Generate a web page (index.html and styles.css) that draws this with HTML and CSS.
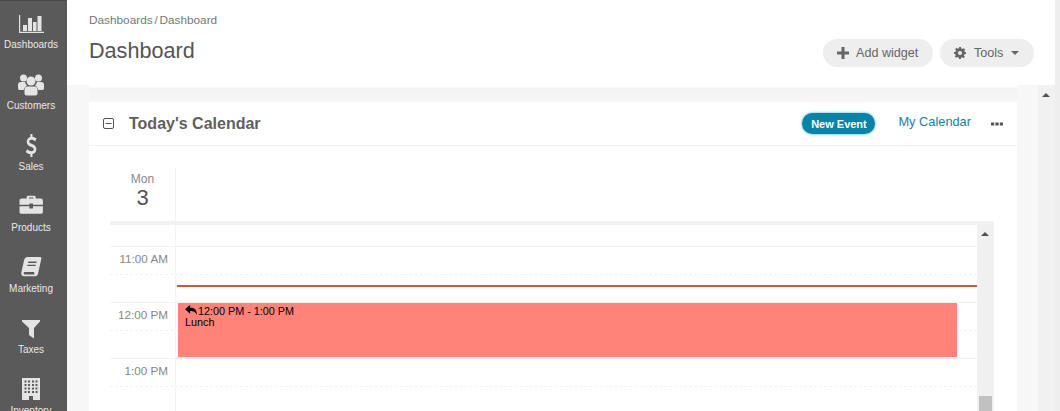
FILE: index.html
```html
<!DOCTYPE html>
<html lang="en">
<head>
    <meta charset="UTF-8">
    <meta name="viewport" content="width=device-width, initial-scale=1.0">
    <title>Dashboard</title>
    <link rel="stylesheet" href="styles.css">
</head>
<body>
    <div class="app">
        <nav class="sidebar">
            <a class="nav-item" href="#">
                <svg class="nav-icon" viewBox="0 0 26 24"><path d="M1 3h1.200v16.800H26V21H1zM5 13h4v6H5zM10 6h4v13h-4zM15 10h3.500v9H15zM19.500 4h4v15h-4z" fill="#e4e4e4"/></svg>
                <span>Dashboards</span>
            </a>
            <a class="nav-item" href="#">
                <svg class="nav-icon" viewBox="0 0 26 24"><g fill="#e4e4e4"><circle cx="5.500" cy="5" r="3.500"/><circle cx="20.500" cy="5" r="3.500"/><circle cx="13" cy="8" r="4.500"/><path d="M0 11.500C0 9.800 1.500 9 3 9h4c.5 1.500 1 2.500 2 3.500-1.500 1-3 2.500-3.300 4.500H1.500C.5 17 0 16 0 15zM26 11.500C26 9.800 24.500 9 23 9h-4c-.5 1.500-1 2.500-2 3.500 1.500 1 3 2.500 3.300 4.500h4.200c1 0 1.500-1 1.500-2zM9.500 13.500h7c2 0 3 1.500 3 3.500v3.500c0 1-1 2-2 2h-9c-1 0-2-1-2-2V17c0-2 1-3.500 3-3.500z"/></g></svg>
                <span>Customers</span>
            </a>
            <a class="nav-item" href="#">
                <svg class="nav-icon" viewBox="0 0 26 24"><path transform="translate(13 0) scale(.85 1) translate(-12.500 0)" d="M11.800 0h2.400v2.800c2 .2 3.600.9 4.800 1.800l-1.500 2.700c-1.300-.9-2.900-1.500-4.500-1.500-1.700 0-2.600.7-2.600 1.700 0 1.200 1.400 1.700 3.400 2.500 3 1.100 5 2.300 5 5.200 0 2.500-1.800 4.400-4.600 4.900V23h-2.400v-2.800c-2.200-.2-4.200-1.100-5.500-2.300l1.700-2.600c1.500 1.200 3.200 2 5 2 1.700 0 2.800-.8 2.800-2 0-1.300-1.300-1.800-3.500-2.600-2.800-1-4.800-2.200-4.800-5 0-2.500 1.800-4.300 4.300-4.800z" fill="#e4e4e4"/></svg>
                <span>Sales</span>
            </a>
            <a class="nav-item" href="#">
                <svg class="nav-icon" viewBox="0 0 26 24"><path transform="translate(1.500 -1) scale(.9)" d="M8 5V3.500C8 2.500 8.800 2 9.500 2h7c.8 0 1.500.5 1.500 1.500V5h5.500C25 5 26 6 26 7.500V12H15v-1.500h-4V12H0V7.500C0 6 1 5 2.500 5zm2.500 0h5V4h-5zM0 13.500h11V16h4v-2.500h11V20c0 1-1 2-2 2H2c-1 0-2-1-2-2z" fill="#e4e4e4"/></svg>
                <span>Products</span>
            </a>
            <a class="nav-item" href="#">
                <svg class="nav-icon" viewBox="0 0 26 24"><path transform="translate(2 0) scale(.88 .92)" d="M8.500 1H23c1 0 1.500.8 1.300 1.800L20.500 19c-.3 1.400-1 2.500-2.500 3H4.500C2.500 22 1 20.500 1.500 18L4.600 4.500C5 2.500 6.500 1 8.500 1zm1 5-.4 1.500h9.500L19 6zm-1 3.500-.4 1.500h9.500l.4-1.500zM5 17.500c-1 0-1.300 2.500.2 2.500h11.300c-.5-.7-.5-1.700-.2-2.500z" fill="#e4e4e4" fill-rule="evenodd"/></svg>
                <span>Marketing</span>
            </a>
            <a class="nav-item" href="#">
                <svg class="nav-icon" viewBox="0 0 26 24"><path d="M4 3h18v1.500l-6 6.500v10.500L11 18v-7L4 4.500z" fill="#e4e4e4"/></svg>
                <span>Taxes</span>
            </a>
            <a class="nav-item" href="#">
                <svg class="nav-icon" viewBox="0 0 26 24"><path d="M4 0h18v22H15v-4h-4v4H4zm2.500 2.500v2h2v-2zm3.500 0v2h2v-2zm4 0v2h2v-2zm3.500 0v2h2v-2zm-11 3.500v2h2V6zm3.500 0v2h2V6zm4 0v2h2V6zm3.500 0v2h2V6zm-11 3.500v2h2v-2zm3.500 0v2h2v-2zm4 0v2h2v-2zm3.500 0v2h2v-2zm-11 3.500v2h2v-2zm3.500 0v2h2v-2zm4 0v2h2v-2zm3.500 0v2h2v-2z" fill="#e4e4e4" fill-rule="evenodd"/></svg>
                <span>Inventory</span>
            </a>
        </nav>

        <div class="main">
            <header class="page-header">
                <div>
                    <div class="breadcrumb">Dashboards / Dashboard</div>
                    <h1>Dashboard</h1>
                </div>
                <div class="header-actions">
                    <button class="pill-btn add-btn">
                        <svg class="btn-icon" viewBox="0 0 12 12"><path d="M4.500 0h3v4.500H12v3H7.500V12h-3V7.500H0v-3h4.500z" fill="#666"/></svg>
                        Add widget
                    </button>
                    <button class="pill-btn tools-btn">
                        <svg class="btn-icon" viewBox="0 0 24 24"><path d="M10 0h4l.6 3.200 2.300 1 2.700-1.900 2.900 2.900-1.900 2.700 1 2.300L24 10v4l-3.200.6-1 2.300 1.900 2.700-2.900 2.900-2.700-1.900-2.300 1L14 24h-4l-.6-3.200-2.300-1-2.700 1.900-2.900-2.900 1.900-2.700-1-2.300L0 14v-4l3.200-.6 1-2.300-1.900-2.700 2.900-2.900 2.700 1.900 2.300-1zm2 8a4 4 0 1 0 0 8 4 4 0 0 0 0-8z" fill="#666" fill-rule="evenodd"/></svg>
                        Tools
                        <span class="caret"></span>
                    </button>
                </div>
            </header>

            <div class="content">
                <div class="header-edge"></div>
                <section class="card">
                    <div class="card-head">
                        <svg class="collapse-icon" viewBox="0 0 11 11"><rect x=".5" y=".5" width="10" height="10" rx="1.500" fill="none" stroke="#555"/><path d="M2.500 5.500h6" stroke="#555"/></svg>
                        <h2>Today's Calendar</h2>
                        <button class="new-event">New Event</button>
                        <a class="my-calendar" href="#">My Calendar</a>
                        <svg class="more-icon" viewBox="0 0 12 4"><path d="M0 .5h3.200v3H0zM4.400 .5h3.200v3H4.400zM8.800 .5H12v3H8.800z" fill="#555"/></svg>
                    </div>
                    <div class="calendar">
                        <div class="day-head">
                            <div class="day-cell">
                                <div class="day-name">Mon</div>
                                <div class="day-num">3</div>
                            </div>
                            <div class="day-rest"></div>
                        </div>
                        <div class="time-pane">
                            <div class="slots">
                                <div class="slot slot-top"><div class="slot-label"></div><div class="slot-body"></div></div>
                                <div class="slot dashed"><div class="slot-label">11:00 AM</div><div class="slot-body"></div></div>
                                <div class="slot"><div class="slot-label"></div><div class="slot-body"></div></div>
                                <div class="slot dashed"><div class="slot-label">12:00 PM</div><div class="slot-body"></div></div>
                                <div class="slot"><div class="slot-label"></div><div class="slot-body"></div></div>
                                <div class="slot dashed"><div class="slot-label">1:00 PM</div><div class="slot-body"></div></div>
                                <div class="slot"><div class="slot-label"></div><div class="slot-body"></div></div>

                                <div class="now-line"></div>
                                <div class="event">
                                    <div>
                                        <svg class="reply-icon" viewBox="0 0 13 11"><path d="M5.500 0v3C10 3 13 5 13 11c-1.500-3.500-3.500-4.500-7.500-4.500v3L0 4.800z" fill="#000"/></svg>
                                        12:00 PM - 1:00 PM
                                    </div>
                                    <div>Lunch</div>
                                </div>
                            </div>
                            <div class="pane-scroll">
                                <span class="arrow-up small"></span>
                                <div class="pane-thumb"></div>
                            </div>
                        </div>
                    </div>
                </section>
                <div class="page-scroll">
                    <span class="arrow-up"></span>
                </div>
            </div>
        </div>
        <div class="right-edge"></div>
    </div>
</body>
</html>
```

FILE: styles.css
```css
body {
    font-family: "Liberation Sans", Arial, sans-serif;
    margin: 0;
    padding: 0;
    background-color: #f7f7f7;
}

.app {
    display: flex;
    height: 411px;
    overflow: hidden;
}

/* left menu */
.sidebar {
    width: 67px;
    flex: none;
    padding: 11px 5px 0 0;
    box-sizing: border-box;
    background-color: #5a5a5a;
    border-top: 1px solid #4a4a4a;
}

.nav-item {
    display: flex;
    flex-direction: column;
    align-items: center;
    height: 61px;
    color: #e8e8e8;
    font-size: 10px;
    line-height: 12px;
    text-decoration: none;
}

.nav-icon {
    width: 26px;
    height: 24px;
    flex: none;
    margin-bottom: 3px;
}

.main {
    width: 988px;
    flex: none;
}

.right-edge {
    flex: 1;
    background-color: #eeeeee;
}

/* page header */
.page-header {
    display: flex;
    justify-content: space-between;
    height: 85px;
    padding: 13px 21px 0 22px;
    box-sizing: border-box;
    background-color: #fff;
}

.breadcrumb {
    font-size: 11.800px;
    line-height: 14px;
    word-spacing: -1.500px;
    color: #777;
}

h1 {
    margin: 11px 0 0 0;
    font-size: 21.600px;
    font-weight: normal;
    line-height: 26px;
    color: #555;
}

.header-actions {
    display: flex;
    gap: 7px;
    padding-top: 26px;
}

.pill-btn {
    display: flex;
    align-items: center;
    height: 28px;
    padding: 0 14px;
    font-family: inherit;
    font-size: 12.600px;
    color: #666;
    background-color: #eee;
    border: none;
    border-radius: 14px;
}

.btn-icon {
    width: 12px;
    height: 12px;
    margin-right: 7px;
}

.add-btn {
    width: 110px;
}

.tools-btn {
    width: 94px;
}

.tools-btn .btn-icon {
    margin-right: 8px;
}

.caret {
    width: 0;
    height: 0;
    margin-left: 8px;
    border-left: 4.500px solid transparent;
    border-right: 4.500px solid transparent;
    border-top: 4px solid #666;
}

/* content area */
.content {
    position: relative;
    height: 326px;
    padding: 0 38px 0 22px;
    background-color: #f7f7f7;
    box-sizing: border-box;
}

.header-edge {
    height: 17px;
    background: linear-gradient(#fff 0, #fff 2px, #f3f3f3 3px, #f7f7f7 100%);
}

.page-scroll {
    position: absolute;
    top: 0;
    right: 0;
    bottom: 0;
    width: 17px;
    background-color: #f1f1f1;
}

.arrow-up {
    position: absolute;
    top: 8px;
    left: 4px;
    width: 0;
    height: 0;
    border-left: 4px solid transparent;
    border-right: 4px solid transparent;
    border-bottom: 4px solid #505050;
}

.card {
    height: 400px;
    background-color: #fff;
}

.card-head {
    display: flex;
    align-items: center;
    height: 43px;
    padding: 0 14px;
    border-bottom: 1px solid #f1f1f1;
}

.collapse-icon {
    width: 11px;
    height: 11px;
    margin-right: 15px;
}

h2 {
    flex: 1;
    margin: 0;
    font-size: 16px;
    font-weight: bold;
    color: #5f5f5f;
}

.new-event {
    width: 73px;
    height: 21px;
    padding: 0;
    font-family: inherit;
    font-size: 11px;
    font-weight: bold;
    color: #fff;
    background-color: #0a84a6;
    border: none;
    border-radius: 11px;
    box-shadow: 0 0 3px #2fb4d6;
}

.my-calendar {
    margin: -4px 20px 0 23px;
    font-size: 12.800px;
    color: #1b7ea5;
    text-decoration: none;
}

.more-icon {
    width: 12px;
    height: 4px;
}

/* calendar */
.calendar {
    padding: 22px 23px 0 21px;
}

.day-head {
    display: flex;
    height: 53px;
}

.day-cell {
    width: 65px;
    padding-top: 4px;
    text-align: center;
    border-right: 1px solid #f1f1f1;
}

.day-name {
    font-size: 12px;
    line-height: 14px;
    color: #888;
}

.day-num {
    font-size: 22px;
    line-height: 24px;
    color: #555;
}

.time-pane {
    display: flex;
    border-top: 4px solid #f1f1f1;
}

.slots {
    position: relative;
    flex: 1;
}

.slot {
    display: flex;
    height: 28px;
    box-sizing: border-box;
    border-bottom: 1px solid #f1f1f1;
}

.slot.dashed {
    border-bottom: 1px dashed #f1f1f1;
}

.slot-top {
    height: 22px;
}

.slot-label {
    width: 58px;
    padding: 5px 7px 0 0;
    flex: none;
    margin-bottom: -1px;
    font-size: 11.700px;
    line-height: 14px;
    color: #888;
    text-align: right;
    border-right: 1px solid #f1f1f1;
}

.now-line {
    position: absolute;
    top: 60px;
    left: 67px;
    right: 0;
    height: 2px;
    background-color: #c65a42;
}

.event {
    position: absolute;
    top: 78px;
    left: 68px;
    width: 779px;
    height: 54px;
    padding: 2px 0 0 7px;
    box-sizing: border-box;
    font-size: 10.800px;
    line-height: 11px;
    color: #000;
    background-color: #ff8378;
}

.reply-icon {
    width: 12px;
    height: 10px;
    margin-right: -2px;
}

.pane-scroll {
    position: relative;
    width: 17px;
    flex: none;
    background-color: #f0f0f0;
}

.arrow-up.small {
    top: 7px;
    left: 4px;
}

.pane-thumb {
    position: absolute;
    top: 171px;
    left: 2px;
    width: 13px;
    height: 30px;
    background-color: #c1c1c1;
}
```
